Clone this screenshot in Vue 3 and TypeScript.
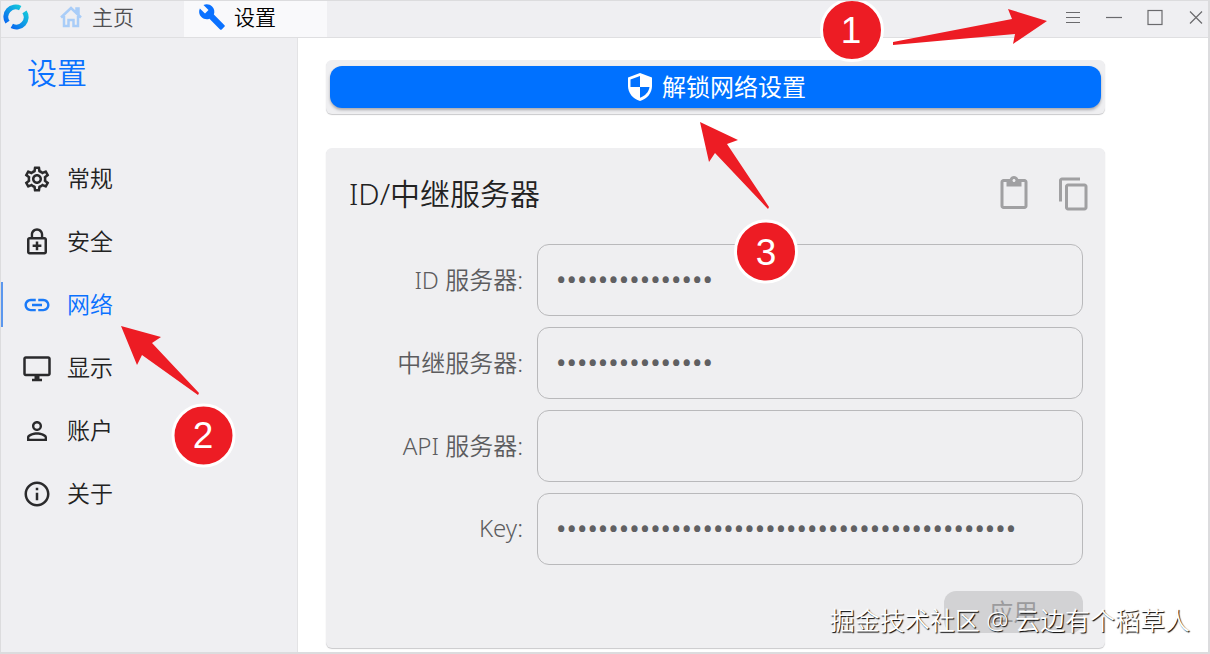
<script setup lang="ts">
import { ref } from 'vue'

interface NavItem {
  label: string
  paths: string[]
}

interface Field {
  id: string
  label: string
  value: string
}

const navItems: NavItem[] = [
  {
    label: '常规',
    paths: [
      'M19.43 12.98c.04-.32.07-.64.07-.98 0-.34-.03-.66-.07-.98l2.11-1.65c.19-.15.24-.42.12-.64l-2-3.46c-.09-.16-.26-.25-.44-.25-.06 0-.12.01-.17.03l-2.49 1c-.52-.4-1.08-.73-1.69-.98l-.38-2.65C14.46 2.18 14.25 2 14 2h-4c-.25 0-.46.18-.49.42l-.38 2.65c-.61.25-1.17.59-1.69.98l-2.49-1c-.06-.02-.12-.03-.18-.03-.17 0-.34.09-.43.25l-2 3.46c-.13.22-.07.49.12.64l2.11 1.65c-.04.32-.07.65-.07.98 0 .33.03.66.07.98l-2.11 1.65c-.19.15-.24.42-.12.64l2 3.46c.09.16.26.25.44.25.06 0 .12-.01.17-.03l2.49-1c.52.4 1.08.73 1.69.98l.38 2.65c.03.24.24.42.49.42h4c.25 0 .46-.18.49-.42l.38-2.65c.61-.25 1.17-.59 1.69-.98l2.49 1c.06.02.12.03.18.03.17 0 .34-.09.43-.25l2-3.46c.12-.22.07-.49-.12-.64l-2.11-1.65zm-1.98-1.71c.04.31.05.52.05.73 0 .21-.02.43-.05.73l-.14 1.13.89.7 1.08.84-.7 1.21-1.27-.51-1.04-.42-.9.68c-.43.32-.84.56-1.25.73l-1.06.43-.16 1.13-.2 1.35h-1.4l-.19-1.35-.16-1.13-1.06-.43c-.43-.18-.83-.41-1.23-.71l-.91-.7-1.06.43-1.27.51-.7-1.21 1.08-.84.89-.7-.14-1.13c-.03-.31-.05-.54-.05-.74s.02-.43.05-.73l.14-1.13-.89-.7-1.08-.84.7-1.21 1.27.51 1.04.42.9-.68c.43-.32.84-.56 1.25-.73l1.06-.43.16-1.13.2-1.35h1.39l.19 1.35.16 1.13 1.06.43c.43.18.83.41 1.23.71l.91.7 1.06-.43 1.27-.51.7 1.21-1.07.85-.89.7.14 1.13zM12 8c-2.21 0-4 1.79-4 4s1.79 4 4 4 4-1.79 4-4-1.79-4-4-4zm0 6c-1.1 0-2-.9-2-2s.9-2 2-2 2 .9 2 2-.9 2-2 2z',
    ],
  },
  {
    label: '安全',
    paths: [
      'M18 8h-1V6c0-2.76-2.24-5-5-5S7 3.24 7 6v2H6c-1.1 0-2 .9-2 2v10c0 1.1.9 2 2 2h12c1.1 0 2-.9 2-2V10c0-1.1-.9-2-2-2zM8.900 6c0-1.710 1.390-3.100 3.100-3.100s3.100 1.390 3.100 3.100v2H8.900V6zM18 20H6V10h12v10z',
      'M11 11.500h2v2.500h2.500v2H13v2.500h-2V16H8.500v-2H11z',
    ],
  },
  {
    label: '网络',
    paths: [
      'M3.900 12c0-1.710 1.390-3.100 3.100-3.100h4V7H7c-2.760 0-5 2.240-5 5s2.240 5 5 5h4v-1.900H7c-1.710 0-3.100-1.390-3.100-3.100zM8 13h8v-2H8v2zm9-6h-4v1.900h4c1.710 0 3.100 1.390 3.100 3.100s-1.390 3.100-3.100 3.100h-4V17h4c2.760 0 5-2.240 5-5s-2.240-5-5-5z',
    ],
  },
  {
    label: '显示',
    paths: [
      'M21 2.500H3c-1.100 0-2 .9-2 2v12c0 1.100.9 2 2 2h7v2H8v2h8v-2h-2v-2h7c1.100 0 2-.9 2-2v-12c0-1.100-.9-2-2-2zm0 14H3v-12h18v12z',
    ],
  },
  {
    label: '账户',
    paths: [
      'M12 5.900a2.100 2.100 0 1 1 0 4.200 2.100 2.100 0 0 1 0-4.200m0 9c2.970 0 6.100 1.460 6.100 2.100v1.100H5.900V17c0-.640 3.130-2.100 6.100-2.100M12 4C9.790 4 8 5.790 8 8s1.790 4 4 4 4-1.790 4-4-1.790-4-4-4zm0 9c-2.670 0-8 1.340-8 4v3h16v-3c0-2.660-5.330-4-8-4z',
    ],
  },
  {
    label: '关于',
    paths: [
      'M11 7h2v2h-2zm0 4h2v6h-2zm1-9C6.480 2 2 6.480 2 12s4.480 10 10 10 10-4.480 10-10S17.520 2 12 2zm0 18c-4.410 0-8-3.590-8-8s3.590-8 8-8 8 3.590 8 8-3.590 8-8 8z',
    ],
  },
]

const activeNav = ref('网络')

const fields = ref<Field[]>([
  { id: 'id-server', label: 'ID 服务器:', value: '0'.repeat(15) },
  { id: 'relay-server', label: '中继服务器:', value: '0'.repeat(15) },
  { id: 'api-server', label: 'API 服务器:', value: '' },
  { id: 'key', label: 'Key:', value: '0'.repeat(44) },
])
</script>

<template>
  <div class="window">
    <header class="titlebar">
      <svg class="logo" viewBox="0 0 26 26" aria-hidden="true">
        <defs>
          <linearGradient id="logo-fill" x1="0" y1="1" x2="1" y2="0">
            <stop offset="0" stop-color="#0a6cf0" />
            <stop offset="1" stop-color="#13c4dc" />
          </linearGradient>
        </defs>
        <g fill="none" stroke="url(#logo-fill)" stroke-width="5">
          <path d="M17.200 4.100A9.800 9.800 0 0 0 4.500 18.200" />
          <path d="M8.800 21.900A9.800 9.800 0 0 0 21.500 7.800" />
        </g>
      </svg>
      <nav class="tabs">
        <button class="tab home" type="button">
          <svg viewBox="0 0 24 24" width="24" height="24" aria-hidden="true">
            <path
              d="M2 12.500L12 3l10 9.500M17.500 7.500V3.500h2v6M5 11v10h4.500v-6h5v6H19V11"
              fill="none"
              stroke="#a9cdf8"
              stroke-width="2.500"
            />
          </svg>
          <span>主页</span>
        </button>
        <button class="tab current" type="button">
          <svg viewBox="0 0 24 24" width="28" height="28" aria-hidden="true">
            <path
              d="M22.700 19l-9.100-9.100c.9-2.300.4-5-1.500-6.900-2-2-5-2.400-7.400-1.300L9 6 6 9 1.600 4.700C.4 7.100.9 10.100 2.900 12.100c1.900 1.900 4.600 2.400 6.900 1.500l9.100 9.100c.4.4 1 .4 1.400 0l2.300-2.300c.5-.4.5-1.100.1-1.400z"
              fill="#0a71ff"
            />
          </svg>
          <span>设置</span>
        </button>
      </nav>
      <div class="controls">
        <button type="button" aria-label="菜单">
          <svg viewBox="0 0 18 18"><path d="M2 4.500h14M2 9.500h14M2 14.500h14" /></svg>
        </button>
        <button type="button" aria-label="最小化">
          <svg viewBox="0 0 18 18"><path d="M1 9.500h16" /></svg>
        </button>
        <button type="button" aria-label="最大化">
          <svg viewBox="0 0 18 18"><rect x="2" y="2.500" width="14" height="14" /></svg>
        </button>
        <button type="button" aria-label="关闭">
          <svg viewBox="0 0 18 18"><path d="M3 3.500l12 12M15 3.500l-12 12" /></svg>
        </button>
      </div>
    </header>

    <div class="body">
      <aside class="sidebar">
        <h1>设置</h1>
        <nav class="menu">
          <button
            v-for="item in navItems"
            :key="item.label"
            type="button"
            class="menu-item"
            :class="{ active: item.label === activeNav }"
            @click="activeNav = item.label"
          >
            <svg viewBox="0 0 24 24" aria-hidden="true">
              <path v-for="d in item.paths" :key="d" :d="d" fill-rule="evenodd" />
            </svg>
            <span>{{ item.label }}</span>
          </button>
        </nav>
      </aside>

      <main class="content">
        <section class="card unlock">
          <button class="unlock-button" type="button">
            <svg viewBox="0 0 24 28" width="24" height="28" aria-hidden="true">
              <path d="M12 0L0 4.500v8.500c0 7 5 13 12 15 7-2 12-8 12-15V4.500z" fill="#fff" />
              <path d="M12 3v11H21.500c-.6 5-4.500 9-9.500 10.700V14H2.500V6.500z" fill="#0071ff" />
            </svg>
            <span>解锁网络设置</span>
          </button>
        </section>

        <section class="card server">
          <div class="card-head">
            <h2>ID/中继服务器</h2>
            <div class="tools">
              <button type="button" aria-label="粘贴">
                <svg viewBox="0 0 24 24">
                  <path
                    d="M19 2h-4.180C14.400.840 13.300 0 12 0S9.600.840 9.180 2H5c-1.100 0-2 .9-2 2v16c0 1.100.9 2 2 2h14c1.100 0 2-.9 2-2V4c0-1.100-.9-2-2-2zm-7 0c.550 0 1 .450 1 1s-.450 1-1 1-1-.450-1-1 .450-1 1-1zm7 18H5V4h2v3h10V4h2v16z"
                  />
                </svg>
              </button>
              <button type="button" aria-label="复制">
                <svg viewBox="0 0 24 24">
                  <path
                    d="M16 1H4c-1.100 0-2 .9-2 2v14h2V3h12V1zm3 4H8c-1.100 0-2 .9-2 2v14c0 1.100.9 2 2 2h11c1.100 0 2-.9 2-2V7c0-1.100-.9-2-2-2zm0 16H8V7h11v14z"
                  />
                </svg>
              </button>
            </div>
          </div>
          <form class="fields" @submit.prevent>
            <template v-for="field in fields" :key="field.id">
              <label :for="field.id">{{ field.label }}</label>
              <input :id="field.id" v-model="field.value" type="password" autocomplete="off" />
            </template>
            <button class="apply" type="submit" disabled>应用</button>
          </form>
        </section>
      </main>
    </div>

    <svg class="callouts" viewBox="0 0 1210 654" width="1210" height="654">
      <g fill="#ed1c24">
        <path d="M1047 21L1008 9l4 10L893 42v3l122-11-2 10z" />
        <path d="M121 326l40 11-9 6 47 50-1 2-56-40-5 10z" />
        <path d="M700 122l38 18-11 4 42 63-1 2-53-56-6 9z" />
      </g>
      <g fill="#ed1c24" stroke="#fff" stroke-width="3">
        <circle cx="852" cy="30" r="30.500" />
        <circle cx="203.500" cy="435.500" r="30.500" />
        <circle cx="766" cy="251.500" r="30.500" />
      </g>
      <g class="callout-number">
        <text x="851" y="43">1</text>
        <text x="203" y="448">2</text>
        <text x="766" y="265">3</text>
      </g>
    </svg>
    <p class="watermark">掘金技术社区 @ 云边有个稻草人</p>
  </div>
</template>

<style>
body {
  margin: 0;
  background: #fff;
}
</style>

<style scoped>
.window {
  position: relative;
  box-sizing: border-box;
  min-height: 100vh;
  display: flex;
  flex-direction: column;
  border: 2px solid #dcdcde;
  border-width: 1px 2px 2px 1px;
  overflow: hidden;
  font-family: "Noto Sans", "Noto Sans CJK SC", sans-serif;
  color: #222;
}
button {
  border: 0;
  padding: 0;
  margin: 0;
  background: none;
  font: inherit;
  color: inherit;
}
svg {
  display: block;
  flex: none;
}
h1,
h2,
p {
  margin: 0;
  font-weight: 350;
}
.titlebar {
  display: flex;
  height: 37px;
  background: #efeff2;
  border-bottom: 1px solid #dfdfe1;
  box-sizing: border-box;
}
.logo {
  width: 26px;
  height: 26px;
  margin: 3px 0 0 2px;
}
.tabs {
  display: flex;
  flex: 1;
}
.tab {
  display: flex;
  align-items: center;
  font-size: 21px;
  line-height: 32px;
  padding-bottom: 4px;
  font-weight: 350;
}
.home {
  width: 155px;
  padding-left: 30px;
  gap: 9px;
  color: #505052;
}
.current {
  width: 143px;
  padding-left: 14px;
  gap: 8px;
  background: #f9f9fb;
  color: #000;
}
.controls {
  display: flex;
  align-items: flex-start;
  gap: 23px;
  padding: 7px 3px 0 0;
}
.controls svg {
  width: 18px;
  height: 18px;
  fill: none;
  stroke: #6a6a6d;
  stroke-width: 1.2;
}
.body {
  flex: 1;
  display: flex;
}
.sidebar {
  width: 297px;
  box-sizing: border-box;
  background: #efeff2;
  border-right: 1px solid #e3e3e5;
}
.sidebar h1 {
  padding: 11px 0 1px 26px;
  font-size: 30px;
  line-height: 48px;
  color: #0a71ff;
}
.menu {
  display: flex;
  flex-direction: column;
  gap: 18px;
  margin-top: 58px;
}
.menu-item {
  display: flex;
  align-items: center;
  gap: 15px;
  height: 45px;
  padding-left: 19px;
  border-left: 2px solid transparent;
  font-size: 23px;
  font-weight: 350;
}
.menu-item span,
.unlock-button span,
.fields label {
  padding-bottom: 4px;
}
.menu-item svg {
  width: 30px;
  height: 30px;
  fill: #2a2a2c;
}
.menu-item.active {
  border-left-color: #5b97ee;
  color: #0a71ff;
}
.menu-item.active svg {
  fill: #1a7af8;
}
.content {
  flex: 1;
  padding: 22px 103px 3px 28px;
}
.card {
  background: #efeff1;
  border-radius: 6px;
  box-shadow: 0 1px 1px #c9c9cb;
}
.unlock {
  padding: 6px 4px;
}
.unlock-button {
  display: flex;
  align-items: center;
  justify-content: center;
  gap: 10px;
  width: 100%;
  height: 42px;
  padding-left: 3px;
  border-radius: 12px;
  background: #0071ff;
  box-shadow: 0 2px 3px #a9a9ad;
  color: #fff;
  font-size: 24px;
}
.server {
  margin-top: 34px;
  padding: 22px 22px 15px 23px;
}
.card-head {
  display: flex;
  justify-content: space-between;
  align-items: center;
  height: 48px;
}
.card-head h2 {
  font-size: 30px;
  line-height: 48px;
}
.tools {
  display: flex;
  gap: 24px;
  margin-right: -9px;
}
.tools svg {
  width: 36px;
  height: 36px;
  fill: #a0a0a2;
}
.fields {
  display: grid;
  grid-template-columns: 174px 1fr;
  gap: 11px 14px;
  align-items: center;
  margin-top: 26px;
}
.fields label {
  text-align: right;
  font-size: 24px;
  font-weight: 350;
  color: #5c5c5e;
  white-space: nowrap;
}
.fields input {
  box-sizing: border-box;
  width: 100%;
  height: 72px;
  padding: 0 18px;
  border: 1px solid #b9b9bb;
  border-radius: 12px;
  background: transparent;
  font-family: Roboto, sans-serif;
  font-size: 31px;
  color: #606062;
}
.apply {
  grid-column: 2;
  justify-self: end;
  width: 139px;
  height: 42px;
  margin-top: 15px;
  padding-bottom: 4px;
  border-radius: 12px;
  background: #d2d2d4;
  color: #9b9b9d;
  font-size: 24px;
}
.callouts {
  position: absolute;
  top: -1px;
  left: -1px;
  pointer-events: none;
}
.callout-number {
  fill: #fff;
  font-family: "Liberation Sans", sans-serif;
  font-size: 37px;
  text-anchor: middle;
}
.watermark {
  position: absolute;
  right: 18px;
  bottom: 12px;
  font-size: 25px;
  line-height: 40px;
  color: #fff;
  text-shadow: 1px 1px 1px #000;
  white-space: nowrap;
}
</style>
